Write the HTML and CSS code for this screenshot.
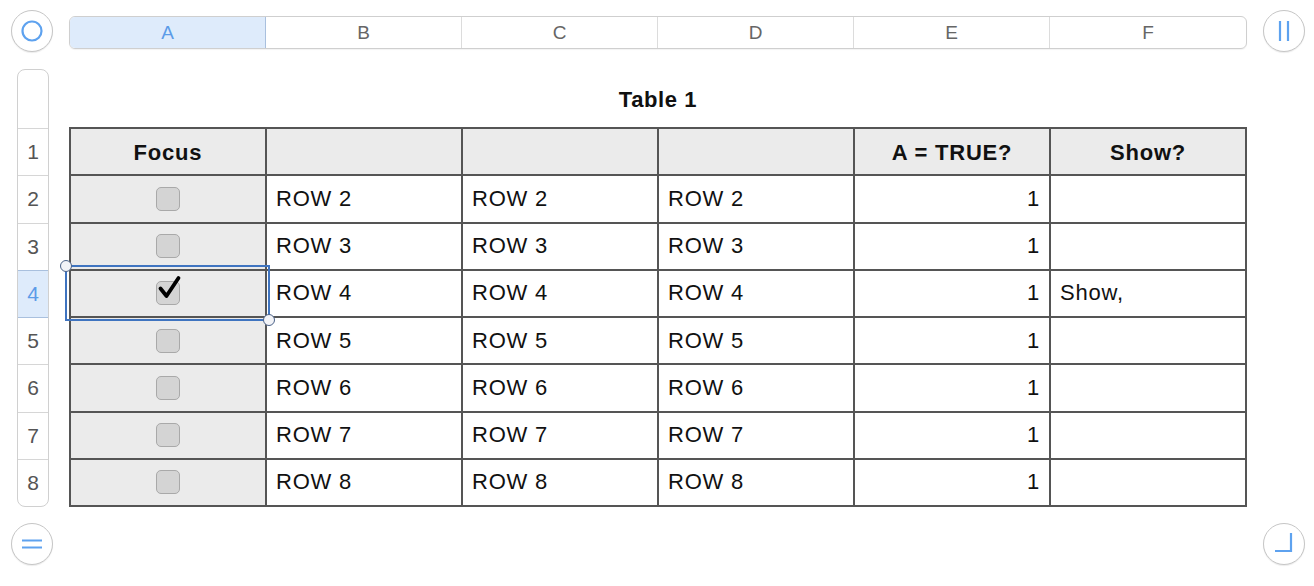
FILE: index.html
```html
<!DOCTYPE html>
<html>
<head>
<meta charset="utf-8">
<link rel="stylesheet" href="styles.css">
</head>
<body>
<div class="sheet">
  <div class="round-btn pos-tl">
    <svg width="42" height="42" viewBox="0 0 42 42"><circle cx="21" cy="21" r="9.5" fill="none" stroke="#5ea2ef" stroke-width="2.2"/></svg>
  </div>
  <div class="col-bar">
    <div class="col-cell active">A</div>
    <div class="col-cell">B</div>
    <div class="col-cell">C</div>
    <div class="col-cell">D</div>
    <div class="col-cell">E</div>
    <div class="col-cell">F</div>
  </div>
  <div class="round-btn pos-tr">
    <svg width="42" height="42" viewBox="0 0 42 42"><path d="M17 11 V31 M25 11 V31" stroke="#5ea2ef" stroke-width="2.2" fill="none"/></svg>
  </div>

  <div class="row-bar">
    <div class="row-top"></div>
    <div class="row-cell">1</div>
    <div class="row-cell">2</div>
    <div class="row-cell">3</div>
    <div class="row-cell active">4</div>
    <div class="row-cell">5</div>
    <div class="row-cell">6</div>
    <div class="row-cell">7</div>
    <div class="row-cell">8</div>
  </div>

  <div class="table-area">
    <div class="table-title">Table 1</div>
    <div class="table-wrap">
      <div class="grid">
        <div class="c hd">Focus</div>
        <div class="c hd"></div>
        <div class="c hd"></div>
        <div class="c hd"></div>
        <div class="c hd">A = TRUE?</div>
        <div class="c hd">Show?</div>

        <div class="c key"><span class="cb"></span></div>
        <div class="c">ROW 2</div><div class="c">ROW 2</div><div class="c">ROW 2</div>
        <div class="c num">1</div><div class="c"></div>

        <div class="c key"><span class="cb"></span></div>
        <div class="c">ROW 3</div><div class="c">ROW 3</div><div class="c">ROW 3</div>
        <div class="c num">1</div><div class="c"></div>

        <div class="c key"><span class="cb">
          <svg class="tick" width="30" height="30" viewBox="0 0 30 30"><path d="M4.5 12.5 L10.5 20 L22.5 2" fill="none" stroke="#000" stroke-width="3.8" stroke-linecap="round" stroke-linejoin="round"/></svg>
        </span></div>
        <div class="c">ROW 4</div><div class="c">ROW 4</div><div class="c">ROW 4</div>
        <div class="c num">1</div><div class="c">Show,</div>

        <div class="c key"><span class="cb"></span></div>
        <div class="c">ROW 5</div><div class="c">ROW 5</div><div class="c">ROW 5</div>
        <div class="c num">1</div><div class="c"></div>

        <div class="c key"><span class="cb"></span></div>
        <div class="c">ROW 6</div><div class="c">ROW 6</div><div class="c">ROW 6</div>
        <div class="c num">1</div><div class="c"></div>

        <div class="c key"><span class="cb"></span></div>
        <div class="c">ROW 7</div><div class="c">ROW 7</div><div class="c">ROW 7</div>
        <div class="c num">1</div><div class="c"></div>

        <div class="c key"><span class="cb"></span></div>
        <div class="c">ROW 8</div><div class="c">ROW 8</div><div class="c">ROW 8</div>
        <div class="c num">1</div><div class="c"></div>
      </div>
      <div class="selection">
        <span class="handle h-tl"></span>
        <span class="handle h-br"></span>
      </div>
    </div>
  </div>

  <div class="round-btn pos-bl">
    <svg width="42" height="42" viewBox="0 0 42 42"><path d="M11 17.5 H31 M11 24.5 H31" stroke="#5ea2ef" stroke-width="2.2" fill="none"/></svg>
  </div>
  <div class="round-btn pos-br">
    <svg width="42" height="42" viewBox="0 0 42 42"><path d="M12 28 H28 V10" stroke="#5ea2ef" stroke-width="2.2" fill="none"/></svg>
  </div>
</div>
</body>
</html>
```

FILE: styles.css
```css
html, body {
  margin: 0;
  padding: 0;
  background: #ffffff;
}

body {
  font-family: "Liberation Sans", Arial, sans-serif;
  color: #111;
}

.sheet {
  display: grid;
  grid-template-columns: 42px 1178px 42px;
  grid-template-rows: 43px 439px 42px;
  column-gap: 16px;
  row-gap: 16px;
  padding: 9px 0 0 11px;
  width: 1314px;
  height: 586px;
  box-sizing: border-box;
}

.round-btn {
  width: 42px;
  height: 42px;
  border-radius: 50%;
  border: 1px solid #c6c6c6;
  box-sizing: border-box;
  background: #fff;
  box-shadow: 0 1px 1px rgba(0,0,0,0.08);
  display: flex;
  align-items: center;
  justify-content: center;
}

.round-btn svg {
  display: block;
  flex: none;
}

.pos-tl { grid-column: 1; grid-row: 1; align-self: end; }
.pos-tr { grid-column: 3; grid-row: 1; align-self: end; }
.pos-bl { grid-column: 1; grid-row: 3; }
.pos-br { grid-column: 3; grid-row: 3; }

/* Column header bar */
.col-bar {
  grid-column: 2;
  grid-row: 1;
  align-self: start;
  margin-top: 7px;
  height: 33px;
  display: grid;
  grid-template-columns: repeat(6, 1fr);
  border: 1px solid #cfcfcf;
  border-radius: 6px;
  overflow: hidden;
  box-sizing: border-box;
  box-shadow: 0 1px 1px rgba(0,0,0,0.05);
}

.col-cell {
  display: flex;
  align-items: center;
  justify-content: center;
  font-size: 19px;
  color: #666;
  border-right: 1px solid #dcdcdc;
}

.col-cell:last-child {
  border-right: none;
}

.col-cell.active {
  background: #deebfb;
  color: #5b9be8;
  border-right-color: #a9c0de;
}

/* Row header bar */
.row-bar {
  grid-column: 1;
  grid-row: 2;
  margin-top: 1px;
  margin-left: 6px;
  width: 32px;
  border: 1px solid #d0d0d0;
  border-radius: 8px;
  box-sizing: border-box;
  overflow: hidden;
  display: flex;
  flex-direction: column;
}

.row-top {
  height: 58px;
  flex: none;
}

.row-cell {
  height: 47.25px;
  flex: none;
  box-sizing: border-box;
  border-top: 1px solid #d6d6d6;
  display: flex;
  align-items: center;
  justify-content: center;
  font-size: 21px;
  color: #555;
}

.row-cell.active {
  background: #deebfb;
  color: #5b9be8;
  border-top-color: #a9c0de;
}

.row-cell.active + .row-cell {
  border-top-color: #a9c0de;
}

/* Table area */
.table-area {
  grid-column: 2;
  grid-row: 2;
  margin-top: 1px;
  display: flex;
  flex-direction: column;
}

.table-title {
  height: 58px;
  box-sizing: border-box;
  padding-top: 4px;
  display: flex;
  align-items: center;
  justify-content: center;
  font-size: 22px;
  letter-spacing: 0.6px;
  font-weight: bold;
  color: #111;
}

.table-wrap {
  position: relative;
}

.grid {
  display: grid;
  grid-template-columns: repeat(6, 1fr);
  grid-template-rows: repeat(8, 1fr);
  gap: 2px;
  padding: 2px;
  background: #555;
  height: 380px;
  box-sizing: border-box;
}

.c {
  background: #fff;
  display: flex;
  align-items: center;
  padding: 0 9px;
  font-size: 22px;
  letter-spacing: 0.8px;
  color: #111;
  white-space: nowrap;
}

.c.hd {
  background: #ebebeb;
  justify-content: center;
  font-weight: bold;
  padding-top: 2px;
}

.c.key {
  background: #ebebeb;
  justify-content: center;
}

.c.num {
  justify-content: flex-end;
  padding-right: 9px;
}

.cb {
  position: relative;
  width: 24px;
  height: 24px;
  box-sizing: border-box;
  border: 1px solid #a9a9a9;
  border-radius: 5px;
  background: #d4d4d4;
}

.tick {
  position: absolute;
  left: -1px;
  top: -6px;
  overflow: visible;
}

/* Selection overlay */
.selection {
  position: absolute;
  left: -4px;
  top: 138px;
  width: 205px;
  height: 56px;
  box-sizing: border-box;
  border: 2px solid #3f74c0;
  pointer-events: none;
}

.handle {
  position: absolute;
  width: 12px;
  height: 12px;
  box-sizing: border-box;
  border-radius: 50%;
  background: #f2f3f7;
  border: 1.5px solid #4b6288;
}

.h-tl {
  left: -7px;
  top: -7px;
}

.h-br {
  right: -7px;
  bottom: -7px;
}
```
